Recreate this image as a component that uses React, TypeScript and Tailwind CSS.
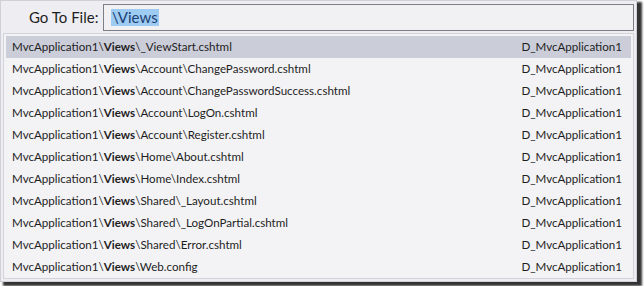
import React from 'react'

const files = [
  '\\_ViewStart.cshtml',
  '\\Account\\ChangePassword.cshtml',
  '\\Account\\ChangePasswordSuccess.cshtml',
  '\\Account\\LogOn.cshtml',
  '\\Account\\Register.cshtml',
  '\\Home\\About.cshtml',
  '\\Home\\Index.cshtml',
  '\\Shared\\_Layout.cshtml',
  '\\Shared\\_LogOnPartial.cshtml',
  '\\Shared\\Error.cshtml',
  '\\Web.config',
]

export default function App() {
  return (
    <div className="w-[644px] h-[286px] bg-white font-['Lato',sans-serif] text-[#1e1e1e]">
      <div className="w-[637px] h-[282px] bg-[#eeeef2] border border-[#cfd0d8] shadow-[4px_3px_2px_1px_rgba(0,0,0,0.8)] flex flex-col">
        {/* Search header */}
        <div className="flex items-center h-[32px] pl-[28px] pr-[2px]">
          <span className="text-[15px] w-[74px] shrink-0 whitespace-nowrap">Go To File:</span>
          <div className="flex-1 h-[27px] border border-[#7e7e84] bg-[#f1f1f3] flex items-center pl-[7px]">
            <span className="text-[15px] leading-[17px] bg-[#9ecbf1] text-[#1b3f73] px-[1px]">\Views</span>
          </div>
        </div>

        {/* Results list */}
        <div className="mx-[2px] border border-[#d3d4db] bg-[#f3f3f5] px-[2px] pt-[2px]">
          {files.map((f, i) => (
            <div
              key={i}
              className={`h-[22px] flex items-center justify-between pl-[6px] pr-[9px] text-[11.6px] whitespace-nowrap ${
                i === 0 ? 'bg-[#cbcdd9]' : ''
              }`}
            >
              <span>
                MvcApplication1\<span className="font-bold">Views</span>
                {f}
              </span>
              <span>D_MvcApplication1</span>
            </div>
          ))}
        </div>
      </div>
    </div>
  )
}
